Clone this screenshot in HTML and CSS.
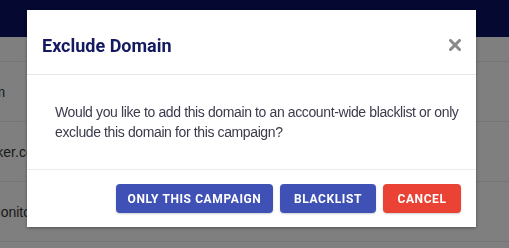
FILE: index.html
```html
<!DOCTYPE html>
<html>
<head>
<meta charset="utf-8">
<link rel="stylesheet" href="styles.css">
</head>
<body>
<div class="page">
  <div class="topbar"></div>
  <div class="table">
    <div class="row head"></div>
    <div class="row"><span class="cell c1">spam-domain.com</span></div>
    <div class="row"><span class="cell c2">tracker.com</span></div>
    <div class="row"><span class="cell c3">monitor.com</span></div>
    <div class="row tail"></div>
  </div>
</div>
<div class="overlay"></div>
<div class="modal">
  <div class="modal-header">
    <h2 class="modal-title">Exclude Domain</h2>
    <svg class="close" width="12" height="12" viewBox="0 0 12 12"><path d="M1.5 1.5 L10.5 10.5 M10.5 1.5 L1.5 10.5" stroke="#8a8a8a" stroke-width="3" stroke-linecap="square"/></svg>
  </div>
  <div class="modal-body">Would you like to add this domain to an account-wide blacklist or only exclude this domain for this campaign?</div>
  <div class="modal-footer">
    <button class="btn btn-primary btn-wide">Only this campaign</button>
    <button class="btn btn-primary btn-mid">Blacklist</button>
    <button class="btn btn-danger btn-small">Cancel</button>
  </div>
</div>
</body>
</html>
```
FILE: styles.css
```css
html, body {
  margin: 0;
  padding: 0;
  width: 509px;
  height: 248px;
  overflow: hidden;
  background: #ffffff;
}
.page {
  font-family: "Liberation Sans", Arial, sans-serif;
}
.topbar {
  height: 37px;
  background: #0a1060;
}
.table {
  display: flex;
  flex-direction: column;
}
.row {
  height: 59px;
  border-bottom: 1px solid #ececec;
  display: flex;
  align-items: center;
  font-size: 14px;
  color: #333;
  white-space: nowrap;
}
.row.head {
  height: 24px;
}
.row.tail {
  height: 6px;
  border-bottom: none;
}
.c1 { margin-left: -110px; }
.c2 { margin-left: -27px; }
.c3 { margin-left: -11px; }
.overlay {
  position: fixed;
  inset: 0;
  background: rgba(0, 0, 0, 0.5);
}
.modal {
  position: absolute;
  left: 27px;
  top: 10px;
  width: 449px;
  background: #ffffff;
  box-shadow: 0 1px 3px rgba(0,0,0,0.35);
  font-family: "Liberation Sans", Arial, sans-serif;
}
.modal-header {
  height: 64px;
  padding: 0 15px;
  display: flex;
  align-items: center;
  justify-content: space-between;
  border-bottom: 1px solid #e6e6e6;
}
.modal-title {
  margin: 0;
  padding-top: 7px;
  font-family: Roboto, "Liberation Sans", sans-serif;
  font-weight: 700;
  font-size: 18px;
  color: #141a60;
}
.close {
  margin-top: 6px;
}
.modal-body {
  padding: 27px 16px 27px 28px;
  font-size: 14px;
  letter-spacing: -0.38px;
  line-height: 20px;
  color: #3b3b4d;
  border-bottom: 1px solid #ececec;
}
.modal-footer {
  display: flex;
  justify-content: flex-end;
  gap: 7px;
  padding: 14px 15px 14px 15px;
}
.btn {
  height: 29px;
  border: none;
  border-radius: 4px;
  font-family: Roboto, "Liberation Sans", sans-serif;
  font-weight: 700;
  font-size: 12px;
  letter-spacing: 0.6px;
  text-transform: uppercase;
  color: #ffffff;
  padding: 0;
  box-shadow: 0 1px 2px rgba(0,0,0,0.2);
}
.btn-primary { background: #3f51b5; }
.btn-danger { background: #ea4335; }
.btn-wide { width: 157px; }
.btn-mid { width: 96px; }
.btn-small { width: 78px; }
```
